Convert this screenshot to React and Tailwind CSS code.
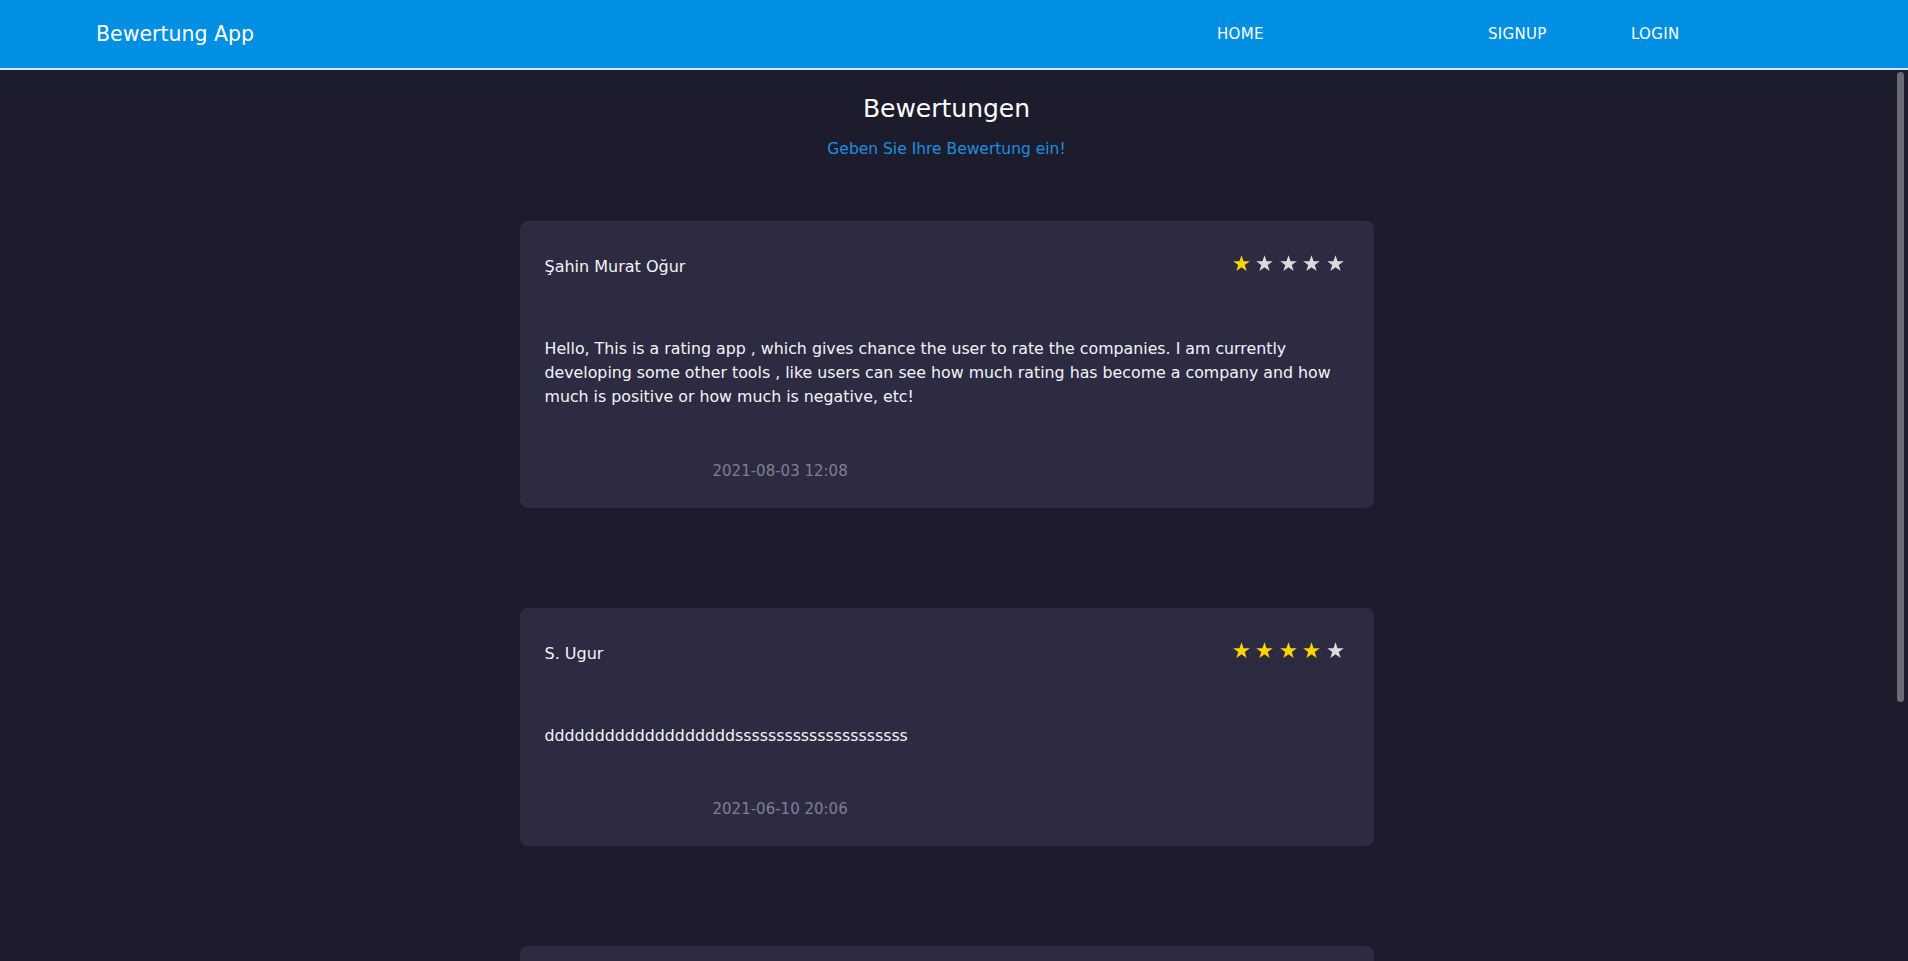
import React from "react";

const reviews = [
  {
    name: "Şahin Murat Oğur",
    rating: 1,
    text: "Hello, This is a rating app , which gives chance the user to rate the companies. I am currently developing some other tools , like users can see how much rating has become a company and how much is positive or how much is negative, etc!",
    date: "2021-08-03 12:08",
  },
  {
    name: "S. Ugur",
    rating: 4,
    text: "dddddddddddddddddddsssssssssssssssssssss",
    date: "2021-06-10 20:06",
  },
  {
    name: "Murat",
    rating: 5,
    text: "Sehr gute Firma, alles hat super geklappt!",
    date: "2021-05-21 09:14",
  },
];

const Star = ({ filled }) => (
  <svg viewBox="0 0 24 24" className="w-[19px] h-[19px]">
    <polygon
      points="12,1.5 14.6,9 22.5,9 16.1,13.8 18.5,21.5 12,16.8 5.5,21.5 7.9,13.8 1.5,9 9.4,9"
      fill={filled ? "#ffd500" : "#dcdcdc"}
    />
  </svg>
);

const ReviewCard = ({ review }) => (
  <div className="w-[854px] mx-auto mb-[100px] bg-[#2d2b42] rounded-[8px] px-[25px] pt-[34px] pb-[25px]">
    <div className="flex items-center justify-between">
      <span className="text-[16px] leading-6 text-[#f4f4f8]">{review.name}</span>
      <div className="flex items-center gap-[4.5px] mr-[4px] mt-[-7px]">
        {[1, 2, 3, 4, 5].map((n) => (
          <Star key={n} filled={n <= review.rating} />
        ))}
      </div>
    </div>
    <p className="mt-[58px] text-[15.8px] leading-6 text-[#f4f4f8]">{review.text}</p>
    <div className="mt-[49.5px] ml-[168px] text-[15px] leading-6 text-[#807e95]">
      {review.date}
    </div>
  </div>
);

export default function App() {
  return (
    <div className="h-screen flex flex-col bg-[#1d1c2c] font-['DejaVu_Sans',sans-serif]">
      <nav className="h-[70px] shrink-0 flex items-center bg-[#018fe3] border-b-2 border-[#cfeafb] text-white">
        <div className="w-[1217px] pl-[96px] text-[20.5px]">Bewertung App</div>
        <ul className="flex items-center text-[15px] tracking-[0.3px]">
          <li className="w-[271px]">HOME</li>
          <li className="w-[143px]">SIGNUP</li>
          <li>LOGIN</li>
        </ul>
      </nav>
      <div className="flex-1 min-h-0 flex">
        <main className="flex-1 overflow-y-auto">
          <div className="pt-[21px] pb-[33px]">
            <h1 className="text-center text-[25px] leading-9 text-white">Bewertungen</h1>
            <p className="mt-[10px] text-center text-[15.5px] leading-6 text-[#1b8fe0]">
              Geben Sie Ihre Bewertung ein!
            </p>
            <div className="mt-[60px]">
              {reviews.map((r, i) => (
                <ReviewCard key={i} review={r} />
              ))}
            </div>
          </div>
        </main>
        <div className="w-[15px] shrink-0 pt-[2px]">
          <div className="mx-auto w-[7px] h-[630px] rounded-full bg-[#6c6b75]"></div>
        </div>
      </div>
    </div>
  );
}
